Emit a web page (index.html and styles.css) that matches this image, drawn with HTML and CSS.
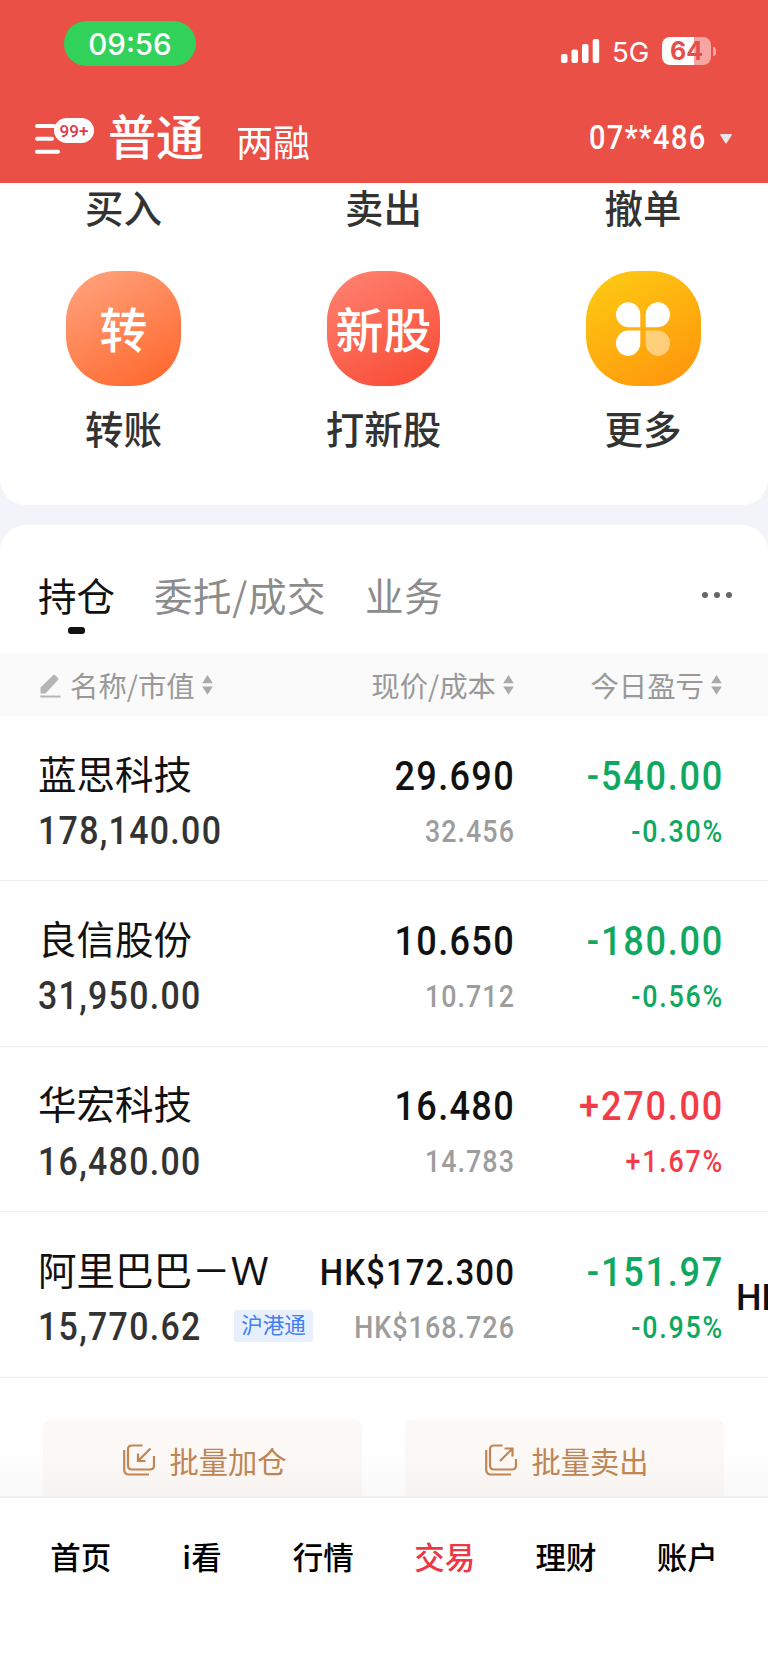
FILE: index.html
```html
<!DOCTYPE html>
<html lang="zh-CN">
<head>
    <meta charset="UTF-8">
    <meta name="viewport" content="width=device-width, initial-scale=1.0">
    <title>交易</title>
    <link rel="stylesheet" href="styles.css">
</head>
<body>
    <div class="header">
        <div class="status-bar">
            <div class="time">09:56</div>
            <div class="status-right">
                <svg class="signal" width="39" height="24" viewBox="0 0 39 24" fill="#fff">
                    <rect x="0" y="15" width="6.5" height="9" rx="2"/>
                    <rect x="10.5" y="10.5" width="6.5" height="13.5" rx="2"/>
                    <rect x="21" y="5" width="6.5" height="19" rx="2"/>
                    <rect x="31.7" y="0" width="6.5" height="24" rx="2"/>
                </svg>
                <span class="network">5G</span>
                <div class="battery">64</div>
                <div class="battery-tip"></div>
            </div>
        </div>
        <div class="account-bar">
            <div class="menu">
                <svg width="26" height="32" viewBox="0 0 26 32" stroke="#fff" stroke-width="4" stroke-linecap="round">
                    <path d="M2 3h17M2 15.700h15M2 28.700h21"/>
                </svg>
                <span class="badge">99+</span>
            </div>
            <div class="account-type active">普通</div>
            <div class="account-type">两融</div>
            <div class="account-no">07**486</div>
            <svg class="caret" width="12" height="10" viewBox="0 0 12 10" fill="#ece6ea"><path d="M1 0h10q1.500 0 .6 1.300L6.800 9q-.8 1-1.600 0L.4 1.300Q-.5 0 1 0z"/></svg>
        </div>
    </div>

    <div class="card shortcuts">
        <div class="shortcut"><span>买入</span></div>
        <div class="shortcut"><span>卖出</span></div>
        <div class="shortcut"><span>撤单</span></div>
        <div class="shortcut">
            <div class="icon transfer">转</div>
            <span>转账</span>
        </div>
        <div class="shortcut">
            <div class="icon ipo">新股</div>
            <span>打新股</span>
        </div>
        <div class="shortcut">
            <div class="icon more">
                <svg width="54" height="54" viewBox="0 0 54 54" fill="#fff">
                    <path d="M24.300 25.200H12.200A12.200 12.500 0 1 1 24.300 12.500z"/>
                    <path d="M29.700 25.200h12.100A12.200 12.500 0 1 0 29.700 12.500z"/>
                    <path d="M24.300 28.500H12.200A12.200 12.700 0 1 0 24.300 41.500z"/>
                    <path opacity=".45" d="M29.700 28.500h12.100A12.200 12.700 0 1 1 29.700 41.500z"/>
                </svg>
            </div>
            <span>更多</span>
        </div>
    </div>

    <div class="card holdings">
        <div class="tabs">
            <div class="tab active">持仓</div>
            <div class="tab">委托/成交</div>
            <div class="tab">业务</div>
            <div class="dots"><i></i><i></i><i></i></div>
        </div>

        <div class="row table-head">
            <div class="head-cell left">
                <svg class="pencil" width="21" height="24" viewBox="0 0 21 24">
                    <path fill="#b5b5b5" d="M.5 19.500V13.500L13 1.300q1-.9 2 0l3 2.800q.9 1 0 2L5.500 19.500z"/>
                    <path stroke="#b5b5b5" stroke-width="1.800" d="M.3 22.500h20.200"/>
                </svg>
                <span>名称/市值</span>
                <svg class="sort" width="11" height="20" viewBox="0 0 11 20" fill="#aaa"><path d="M5.500 0l5.300 8.300H.2zM.2 11.500h10.600l-5.300 8.300z"/></svg>
            </div>
            <div class="head-cell">
                <span>现价/成本</span>
                <svg class="sort" width="11" height="20" viewBox="0 0 11 20" fill="#aaa"><path d="M5.500 0l5.300 8.300H.2zM.2 11.500h10.600l-5.300 8.300z"/></svg>
            </div>
            <div class="head-cell">
                <span>今日盈亏</span>
                <svg class="sort" width="11" height="20" viewBox="0 0 11 20" fill="#aaa"><path d="M5.500 0l5.300 8.300H.2zM.2 11.500h10.600l-5.300 8.300z"/></svg>
            </div>
        </div>

        <div class="row stock">
            <div class="name">蓝思科技</div>
            <div class="price">29.690</div>
            <div class="change down">-540.00</div>
            <div class="value"><span class="amount">178,140.00</span></div>
            <div class="cost">32.456</div>
            <div class="percent down">-0.30%</div>
        </div>
        <div class="row stock">
            <div class="name">良信股份</div>
            <div class="price">10.650</div>
            <div class="change down">-180.00</div>
            <div class="value"><span class="amount">31,950.00</span></div>
            <div class="cost">10.712</div>
            <div class="percent down">-0.56%</div>
        </div>
        <div class="row stock">
            <div class="name">华宏科技</div>
            <div class="price">16.480</div>
            <div class="change up">+270.00</div>
            <div class="value"><span class="amount">16,480.00</span></div>
            <div class="cost">14.783</div>
            <div class="percent up">+1.67%</div>
        </div>
        <div class="row stock">
            <div class="name">阿里巴巴－Ｗ</div>
            <div class="price hk">HK$172.300</div>
            <div class="change down">-151.97</div>
            <div class="next-col">HK</div>
            <div class="value"><span class="amount">15,770.62</span><span class="tag">沪港通</span></div>
            <div class="cost">HK$168.726</div>
            <div class="percent down">-0.95%</div>
        </div>

        <div class="batch">
            <div class="batch-btn">
                <svg width="32" height="32" viewBox="0 0 32 32" fill="none" stroke="#c08552" stroke-width="2.200">
                    <path d="M19.500 1.500H9q-4 0-4 4v16q0 4 4 4h18q4 0 4-4V12"/>
                    <path d="M1.200 6v19.500q0 5 5 5H26M27.500 4.500L15.500 16.500M15 9.500V17h7.500"/>
                </svg>
                <span>批量加仓</span>
            </div>
            <div class="batch-btn">
                <svg width="32" height="32" viewBox="0 0 32 32" fill="none" stroke="#c08552" stroke-width="2.200">
                    <path d="M17.500 1.500H9q-4 0-4 4v16q0 4 4 4h18q4 0 4-4V15"/>
                    <path d="M1.200 6v19.500q0 5 5 5H26M15 17L27 5M19.500 4.500H27.500V12.500"/>
                </svg>
                <span>批量卖出</span>
            </div>
        </div>
    </div>

    <div class="nav">
        <div class="nav-item">首页</div>
        <div class="nav-item">i看</div>
        <div class="nav-item">行情</div>
        <div class="nav-item active">交易</div>
        <div class="nav-item">理财</div>
        <div class="nav-item">账户</div>
    </div>
</body>
</html>
```
FILE: styles.css
```css
* {
    box-sizing: border-box;
}

body {
    margin: 0;
    width: 768px;
    height: 1663px;
    overflow: hidden;
    display: flex;
    flex-direction: column;
    background-color: #f3f4f9;
    font-family: "Noto Sans CJK SC", sans-serif;
    color: #111;
    white-space: nowrap;
}

.header {
    height: 183px;
    flex: none;
    background-color: #eb5047;
    color: #fff;
}

.status-bar {
    height: 87px;
    padding: 21px 52px 0 64px;
    display: flex;
    justify-content: space-between;
    align-items: flex-start;
    font-family: Inter, sans-serif;
}

.time {
    width: 132px;
    height: 45px;
    line-height: 46px;
    border-radius: 23px;
    background-color: #32d15a;
    text-align: center;
    font-size: 29.5px;
    font-weight: 500;
}

.status-right {
    display: flex;
    align-items: center;
    height: 28px;
    margin-top: 16px;
}

.network {
    margin: 2px 0 0 12px;
    width: 50px;
    font-size: 27.5px;
}

.battery {
    width: 49px;
    height: 28px;
    line-height: 28px;
    border-radius: 8px;
    background: linear-gradient(to right, #fff 65%, #f6a5a1 65%);
    color: #e2504b;
    font-size: 25px;
    font-weight: 700;
    text-align: center;
}

.battery-tip {
    width: 3px;
    height: 9px;
    margin-left: 2px;
    border-radius: 0 4px 4px 0;
    background-color: #f6a5a1;
}

.account-bar {
    height: 96px;
    padding: 0 36px 0 35px;
    display: flex;
    align-items: center;
}

.menu {
    position: relative;
    width: 73px;
    height: 32px;
    margin-top: 8px;
}

.badge {
    position: absolute;
    left: 19px;
    top: -5px;
    width: 40px;
    height: 25px;
    line-height: 26px;
    border-radius: 13px;
    background-color: #fff;
    color: #d83a4a;
    text-align: center;
    font-family: Roboto, sans-serif;
    font-size: 17px;
    font-weight: 500;
}

.account-type {
    font-size: 37px;
    margin: 12px 0 0 32px;
}

.account-type.active {
    font-size: 48px;
    font-weight: 500;
    margin: 0 0 3px 0;
}

.account-no {
    margin: 4px 13px 0 auto;
    font-family: Roboto, sans-serif;
    font-size: 33px;
    font-weight: 500;
    letter-spacing: 1.5px;
    transform: scaleX(0.88);
    transform-origin: right;
}

.caret {
    margin-top: 7px;
}

.card {
    background-color: #fff;
    flex: none;
}

.shortcuts {
    height: 322px;
    border-radius: 0 0 26px 26px;
    display: grid;
    grid-template-columns: 247px 273px 246px;
    grid-template-rows: 88px 1fr;
}

.shortcut {
    display: flex;
    flex-direction: column;
    align-items: center;
    color: #333;
    font-size: 38.5px;
    font-weight: 500;
    line-height: 50px;
}

.shortcut span {
    margin-top: -2px;
}

.icon {
    width: 115px;
    height: 115px;
    margin-bottom: 18px;
    padding-bottom: 4px;
    border-radius: 50px;
    display: flex;
    align-items: center;
    justify-content: center;
    color: #fff;
    font-size: 48px;
    font-weight: 500;
}

.transfer {
    background: linear-gradient(150deg, #ff9f78 10%, #ff6a30 90%);
}

.ipo {
    width: 113px;
    background: linear-gradient(150deg, #ff7e6c 10%, #f84e38 90%);
}

.more {
    padding-bottom: 0;
    background: linear-gradient(150deg, #fdc712 10%, #ff980c 90%);
}

.holdings {
    margin-top: 20px;
    height: 971px;
    border-radius: 26px 26px 0 0;
    overflow: hidden;
}

.tabs {
    height: 128px;
    padding: 0 36px 0 38px;
    display: flex;
    align-items: center;
    gap: 39px;
}

.tab {
    position: relative;
    margin-top: 9px;
    font-size: 38.5px;
    color: #8c8c8c;
    letter-spacing: 0.6px;
}

.tab.active {
    color: #111;
    letter-spacing: 0;
}

.tab.active::after {
    content: "";
    position: absolute;
    left: 30px;
    bottom: -12px;
    width: 17px;
    height: 7px;
    border-radius: 3px;
    background-color: #111;
}

.dots {
    margin: 12px 0 0 auto;
    display: flex;
    gap: 6px;
}

.dots i {
    width: 6px;
    height: 6px;
    border-radius: 50%;
    background-color: #666;
}

.row {
    display: grid;
    grid-template-columns: 276px 200px 208px 60px;
    padding-left: 38px;
}

.table-head {
    height: 63px;
    background-color: #fafafa;
    color: #999;
    font-size: 28.4px;
}

.head-cell {
    display: flex;
    align-items: center;
    justify-content: flex-end;
    gap: 7px;
}

.head-cell.left {
    justify-content: flex-start;
    padding-left: 2px;
}

.pencil {
    margin: 2px 2px 0 0;
}

.stock {
    height: 165.4px;
    padding-top: 29px;
    grid-template-rows: 57px 55px;
    align-items: center;
    border-bottom: 1px solid #ececec;
    font-family: Roboto, "Noto Sans CJK SC", sans-serif;
    font-weight: 500;
}

.name {
    margin-top: -4px;
    font-family: "Noto Sans CJK SC", sans-serif;
    font-size: 38.5px;
    font-weight: 400;
    line-height: 50px;
}

.value {
    grid-column: 1;
    display: flex;
    align-items: center;
    justify-content: space-between;
    color: #333;
    font-size: 38.5px;
}

/* condensed figures */
.amount {
    margin-top: 2px;
    letter-spacing: 1.5px;
    transform: scaleX(0.88);
    transform-origin: left;
}

.price,
.change,
.cost,
.percent {
    display: flex;
    justify-content: flex-end;
    transform: scaleX(0.88);
    transform-origin: right;
}

.price,
.change {
    margin: 4px -1px 0 0;
    font-size: 41px;
    letter-spacing: 1.5px;
}

.change {
    margin-right: -2px;
    letter-spacing: 2px;
}

.price.hk {
    font-size: 37.5px;
    letter-spacing: 1.2px;
}

.cost,
.percent {
    margin: 3px -1px 0 0;
    font-size: 30.5px;
    letter-spacing: 1.2px;
}

.percent {
    margin-right: -2px;
    letter-spacing: 2px;
}

.cost {
    color: #9d9d9d;
}

.down {
    color: #0fa860;
}

.up {
    color: #f23c48;
}

.next-col {
    grid-column: 4;
    grid-row: 1 / 3;
    margin-top: 2px;
    padding-left: 14px;
    font-size: 36px;
}

.tag {
    width: 79px;
    height: 32px;
    margin: 1px 1px 0 0;
    line-height: 32px;
    border-radius: 3px;
    background-color: #e8f0fe;
    color: #3f7ff2;
    text-align: center;
    font-size: 21.5px;
    font-weight: 400;
}

.batch {
    height: 118px;
    padding: 42px 44px 0 43px;
    display: grid;
    grid-template-columns: 1fr 1fr;
    gap: 43px;
    background: linear-gradient(to bottom, #fff 60%, #f9f9f9);
}

.batch-btn {
    height: 82px;
    display: flex;
    justify-content: center;
    gap: 14px;
    padding: 24px 0 0 5px;
    border-radius: 7px;
    background: linear-gradient(to bottom, #fcf8f6 45%, #f6f2f0);
    color: #c08552;
    font-size: 29.3px;
    line-height: 32px;
}

.nav {
    flex: 1;
    padding: 36px 20px 0;
    border-top: 2px solid #efefef;
    background-color: #fefefe;
    display: flex;
}

.nav-item {
    flex: 1;
    text-align: center;
    color: #000;
    font-size: 30.5px;
    font-weight: 500;
    line-height: 44px;
}

.nav-item.active {
    color: #ec3845;
}
```
